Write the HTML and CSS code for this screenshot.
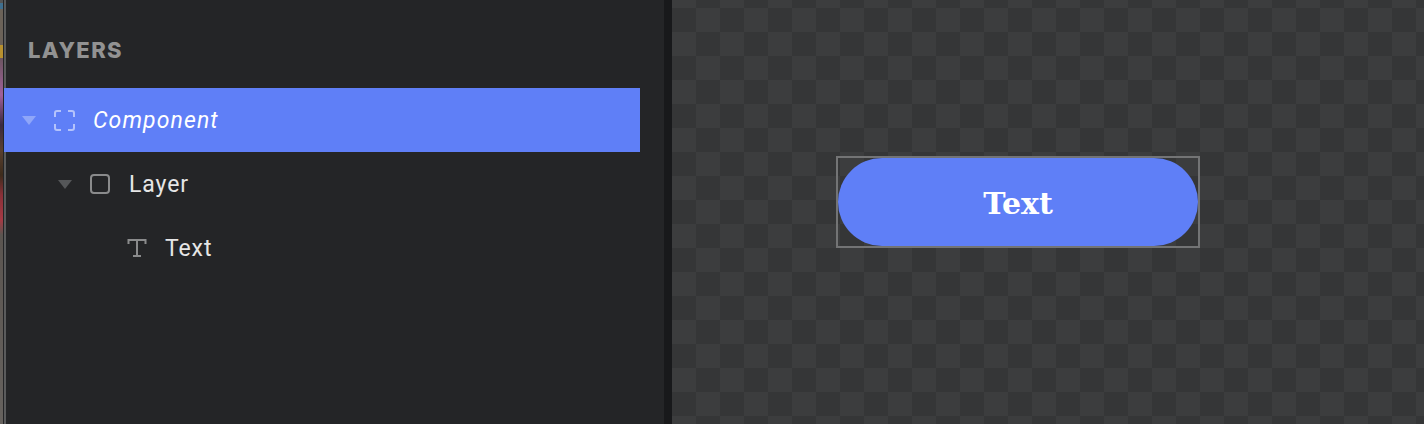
FILE: index.html
```html
<!DOCTYPE html>
<html lang="en">
  <head>
    <meta charset="UTF-8" />
    <title>Layers</title>
    <link rel="stylesheet" href="styles.css">
  </head>
  <body>
    <div class="app">
      <div class="strip"></div>
      <div class="panel">
        <div class="panel-title">LAYERS</div>
        <div class="row row-selected depth-0">
          <svg class="arrow" width="14" height="9" viewBox="0 0 14 9"><path d="M0 0H14L7 9Z" /></svg>
          <svg class="icon-frame" width="23" height="23" viewBox="0 0 23 23">
            <path d="M2 8V4a2 2 0 0 1 2-2h4M15 2h4a2 2 0 0 1 2 2v4M21 15v4a2 2 0 0 1-2 2h-4M8 21H4a2 2 0 0 1-2-2v-4" />
          </svg>
          <span class="row-label">Component</span>
        </div>
        <div class="row depth-1">
          <svg class="arrow" width="14" height="9" viewBox="0 0 14 9"><path d="M0 0H14L7 9Z" /></svg>
          <svg class="icon-layer" width="22" height="22" viewBox="0 0 22 22"><rect x="2" y="2" width="18" height="18" rx="3" /></svg>
          <span class="row-label">Layer</span>
        </div>
        <div class="row depth-2">
          <svg class="icon-text" width="20" height="20" viewBox="0 0 20 20">
            <path d="M1.5 6V2H18.5V6M10 2V18M6 18H14" />
          </svg>
          <span class="row-label">Text</span>
        </div>
      </div>
      <div class="divider"></div>
      <div class="canvas">
        <div class="selection">
          <button class="pill">Text</button>
        </div>
      </div>
    </div>
  </body>
</html>
```

FILE: styles.css
```css
html, body {
  margin: 0;
  height: 100%;
  overflow: hidden;
  background-color: #242527;
}
.app {
  display: flex;
  height: 424px;
  font-family: Roboto, sans-serif;
}
.strip {
  width: 3px;
  margin-right: 1px;
  flex-shrink: 0;
  background: linear-gradient(to bottom, #555 0, #555 3px, #3f6f8f 3px, #3f6f8f 9px, #6b6258 9px, #6b6258 45px, #b8912f 45px, #b8912f 58px, #6b5560 58px, #a0609a 95px, #3a2a40 125px, #5a4030 150px, #3d2c1c 175px, #8a3038 195px, #a53a44 220px, #5b5550 235px, #66625e 424px);
}
.panel {
  width: 660px;
  flex-shrink: 0;
  box-shadow: inset 2px 0 0 #5a5b5c;
  background-color: #242527;
}
.panel-title {
  height: 88px;
  box-sizing: border-box;
  padding: 38px 0 0 24px;
  font-family: Inter, sans-serif;
  font-size: 22px;
  line-height: 24px;
  font-weight: 800;
  letter-spacing: 1.4px;
  color: #929292;
}
.row {
  display: flex;
  align-items: center;
  box-sizing: border-box;
  width: 636px;
  height: 64px;
  color: #e6e6e6;
  font-size: 23px;
  letter-spacing: 0.9px;
}
.row-selected {
  background-color: #5f7ff7;
  color: #fff;
  font-style: italic;
  letter-spacing: 1.1px;
}
.depth-0 {
  padding-left: 18px;
}
.depth-1 {
  padding-left: 54px;
}
.depth-2 {
  padding-left: 123px;
}
.arrow {
  fill: #555759;
  margin-right: 17px;
}
.row-selected .arrow {
  fill: #8fa6f9;
}
.icon-frame {
  margin-right: 17px;
  fill: none;
  stroke: #b4c3fb;
  stroke-width: 2;
}
.icon-layer {
  margin-right: 18px;
  fill: none;
  stroke: #8a8b8c;
  stroke-width: 2;
}
.icon-text {
  margin-right: 18px;
  fill: none;
  stroke: #8a8b8c;
  stroke-width: 2;
}
.divider {
  width: 8px;
  flex-shrink: 0;
  background-color: #18191b;
}
.canvas {
  flex: 1;
  box-sizing: border-box;
  padding: 156px 0 0 164px;
  background-color: #3c3d3e;
  background-image: conic-gradient(#353637 25%, transparent 0 50%, #353637 0 75%, transparent 0);
  background-size: 48px 48px;
  background-position: 24px 8px;
}
.selection {
  width: 360px;
  height: 88px;
  border: 2px solid #737475;
}
.pill {
  display: block;
  width: 360px;
  height: 88px;
  padding: 2px 0 0;
  border: none;
  border-radius: 44px;
  background-color: #5f7ff7;
  color: #fff;
  font-family: "DejaVu Serif", serif;
  font-size: 30px;
  font-weight: 700;
}
```
